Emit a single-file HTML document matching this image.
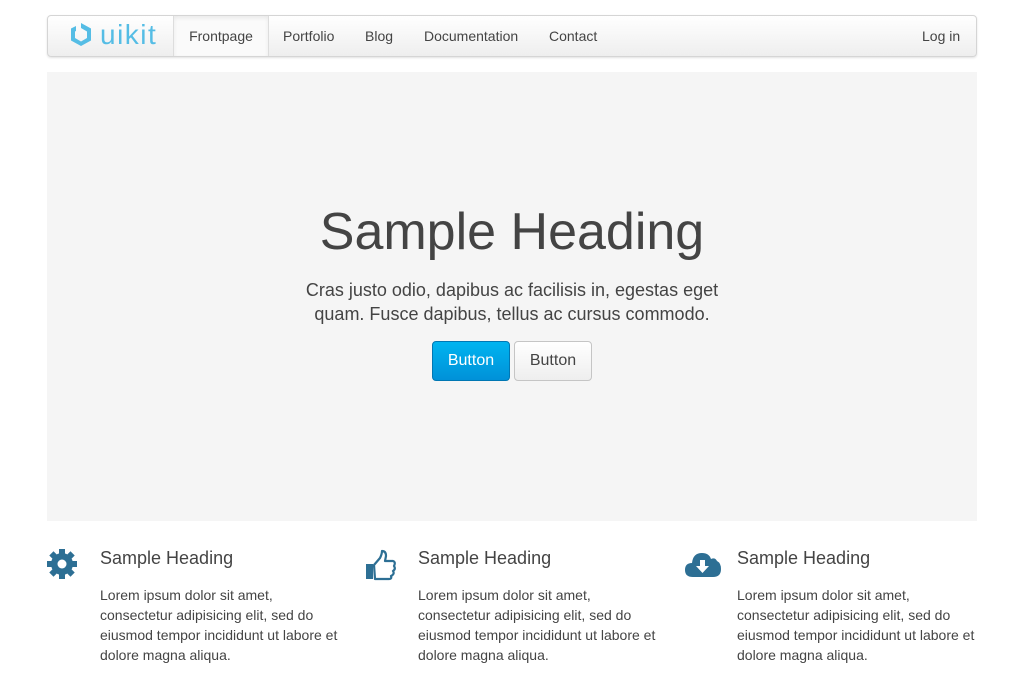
<!DOCTYPE html>
<html><head><meta charset="utf-8"><style>
*{box-sizing:border-box;margin:0;padding:0}
body{width:1024px;height:680px;background:#fff;font-family:"Liberation Sans",sans-serif;color:#444;position:relative;overflow:hidden}
.nav{position:absolute;left:47px;top:15px;width:930px;height:42px;border:1px solid #d5d5d5;border-radius:4px;background:linear-gradient(#fff,#eee);box-shadow:0 1px 2px rgba(0,0,0,.12)}
.nav a{position:absolute;top:0;height:40px;line-height:40px;font-size:14px;color:#444;text-decoration:none}
.nav .act{left:125px;width:96px;background:#fafafa;border-left:1px solid #ddd;border-right:1px solid #ddd;text-align:center;box-shadow:inset 0 2px 4px rgba(0,0,0,.07)}
.logo{position:absolute;left:20px;top:5px;font-size:28px;color:#55bde5;line-height:28px;letter-spacing:1.5px;white-space:nowrap}
.hero{position:absolute;left:47px;top:72px;width:930px;height:449px;background:#f5f5f5;text-align:center}
.hero h1{position:absolute;top:128px;width:100%;font-size:52px;font-weight:normal;color:#444;line-height:64px}
.hero p{position:absolute;top:206px;width:100%;font-size:18px;line-height:24px;color:#444}
.btn{position:absolute;top:269px;height:40px;line-height:38px;font-size:16px;border-radius:4px;text-align:center}
.b1{left:385px;width:78px;background:linear-gradient(#00b4f0,#0091d8);color:#fff;border:1px solid #0077b3}
.b2{left:467px;width:78px;background:linear-gradient(#fff,#eee);color:#444;border:1px solid #c5c5c5}
.col{position:absolute;top:545px}
.col h3{position:absolute;left:53px;top:3px;font-size:18px;font-weight:normal;white-space:nowrap;color:#444}
.col p{position:absolute;left:53px;top:40px;width:242px;font-size:14px;line-height:20px;color:#444}
.col svg{position:absolute;left:0;top:4px}
</style></head><body>
<div class="nav">
<div class="logo"><svg width="26" height="27" viewBox="0 0 26 27" style="vertical-align:-4px;margin-right:6px"><path d="M13 2 L23 7.5 V19.5 L13 25 L3 19.5 V7.5 L8 5 V10 L7 10.5 V17 L13 20.5 L19 17 V10.5 L13 7 Z" fill="#55bde5"/></svg>uikit</div>
<a class="act">Frontpage</a>
<a style="left:235px">Portfolio</a>
<a style="left:317px">Blog</a>
<a style="left:376px">Documentation</a>
<a style="left:501px">Contact</a>
<a style="left:874px">Log in</a>
</div>
<div class="hero">
<h1>Sample Heading</h1>
<p>Cras justo odio, dapibus ac facilisis in, egestas eget<br>quam. Fusce dapibus, tellus ac cursus commodo.</p>
<div class="btn b1">Button</div><div class="btn b2">Button</div>
</div>
<div class="col" style="left:47px">
<svg width="30" height="30" viewBox="0 0 30 30"><g fill="#2d6f94"><circle cx="15" cy="15" r="11"/><g transform="translate(15 15)"><rect x="-3" y="-15" width="6" height="30"/><rect x="-3" y="-15" width="6" height="30" transform="rotate(45)"/><rect x="-3" y="-15" width="6" height="30" transform="rotate(90)"/><rect x="-3" y="-15" width="6" height="30" transform="rotate(135)"/></g></g><circle cx="15" cy="15" r="4.5" fill="#fff"/></svg>
<h3>Sample Heading</h3>
<p>Lorem ipsum dolor sit amet, consectetur adipisicing elit, sed do eiusmod tempor incididunt ut labore et dolore magna aliqua.</p></div>
<div class="col" style="left:365px">
<svg width="32" height="32" viewBox="0 0 32 32"><rect x="1" y="15" width="7" height="15" fill="#2d6f94"/><path d="M9 16 L15 9 Q17 5 17 2 Q21 2 21 7 L20 12 H28 Q31 13 29 17 Q31 20 28 22 Q30 25 26 27 Q27 30 24 30 H10 Z" fill="none" stroke="#2d6f94" stroke-width="2.2" stroke-linejoin="round"/></svg>
<h3>Sample Heading</h3>
<p>Lorem ipsum dolor sit amet, consectetur adipisicing elit, sed do eiusmod tempor incididunt ut labore et dolore magna aliqua.</p></div>
<div class="col" style="left:684px">
<svg width="38" height="30" viewBox="0 0 38 30"><path d="M9 28 Q1 28 1 21 Q1 14 8 14 Q9 4 18 4 Q25 4 27 10 Q31 8 33 12 Q37 14 37 20 Q37 28 29 28 Z" fill="#2d6f94"/><path d="M16 11 H21 V17 H25 L18.5 24 L12 17 H16 Z" fill="#fff"/></svg>
<h3>Sample Heading</h3>
<p>Lorem ipsum dolor sit amet, consectetur adipisicing elit, sed do eiusmod tempor incididunt ut labore et dolore magna aliqua.</p></div>
</body></html>
